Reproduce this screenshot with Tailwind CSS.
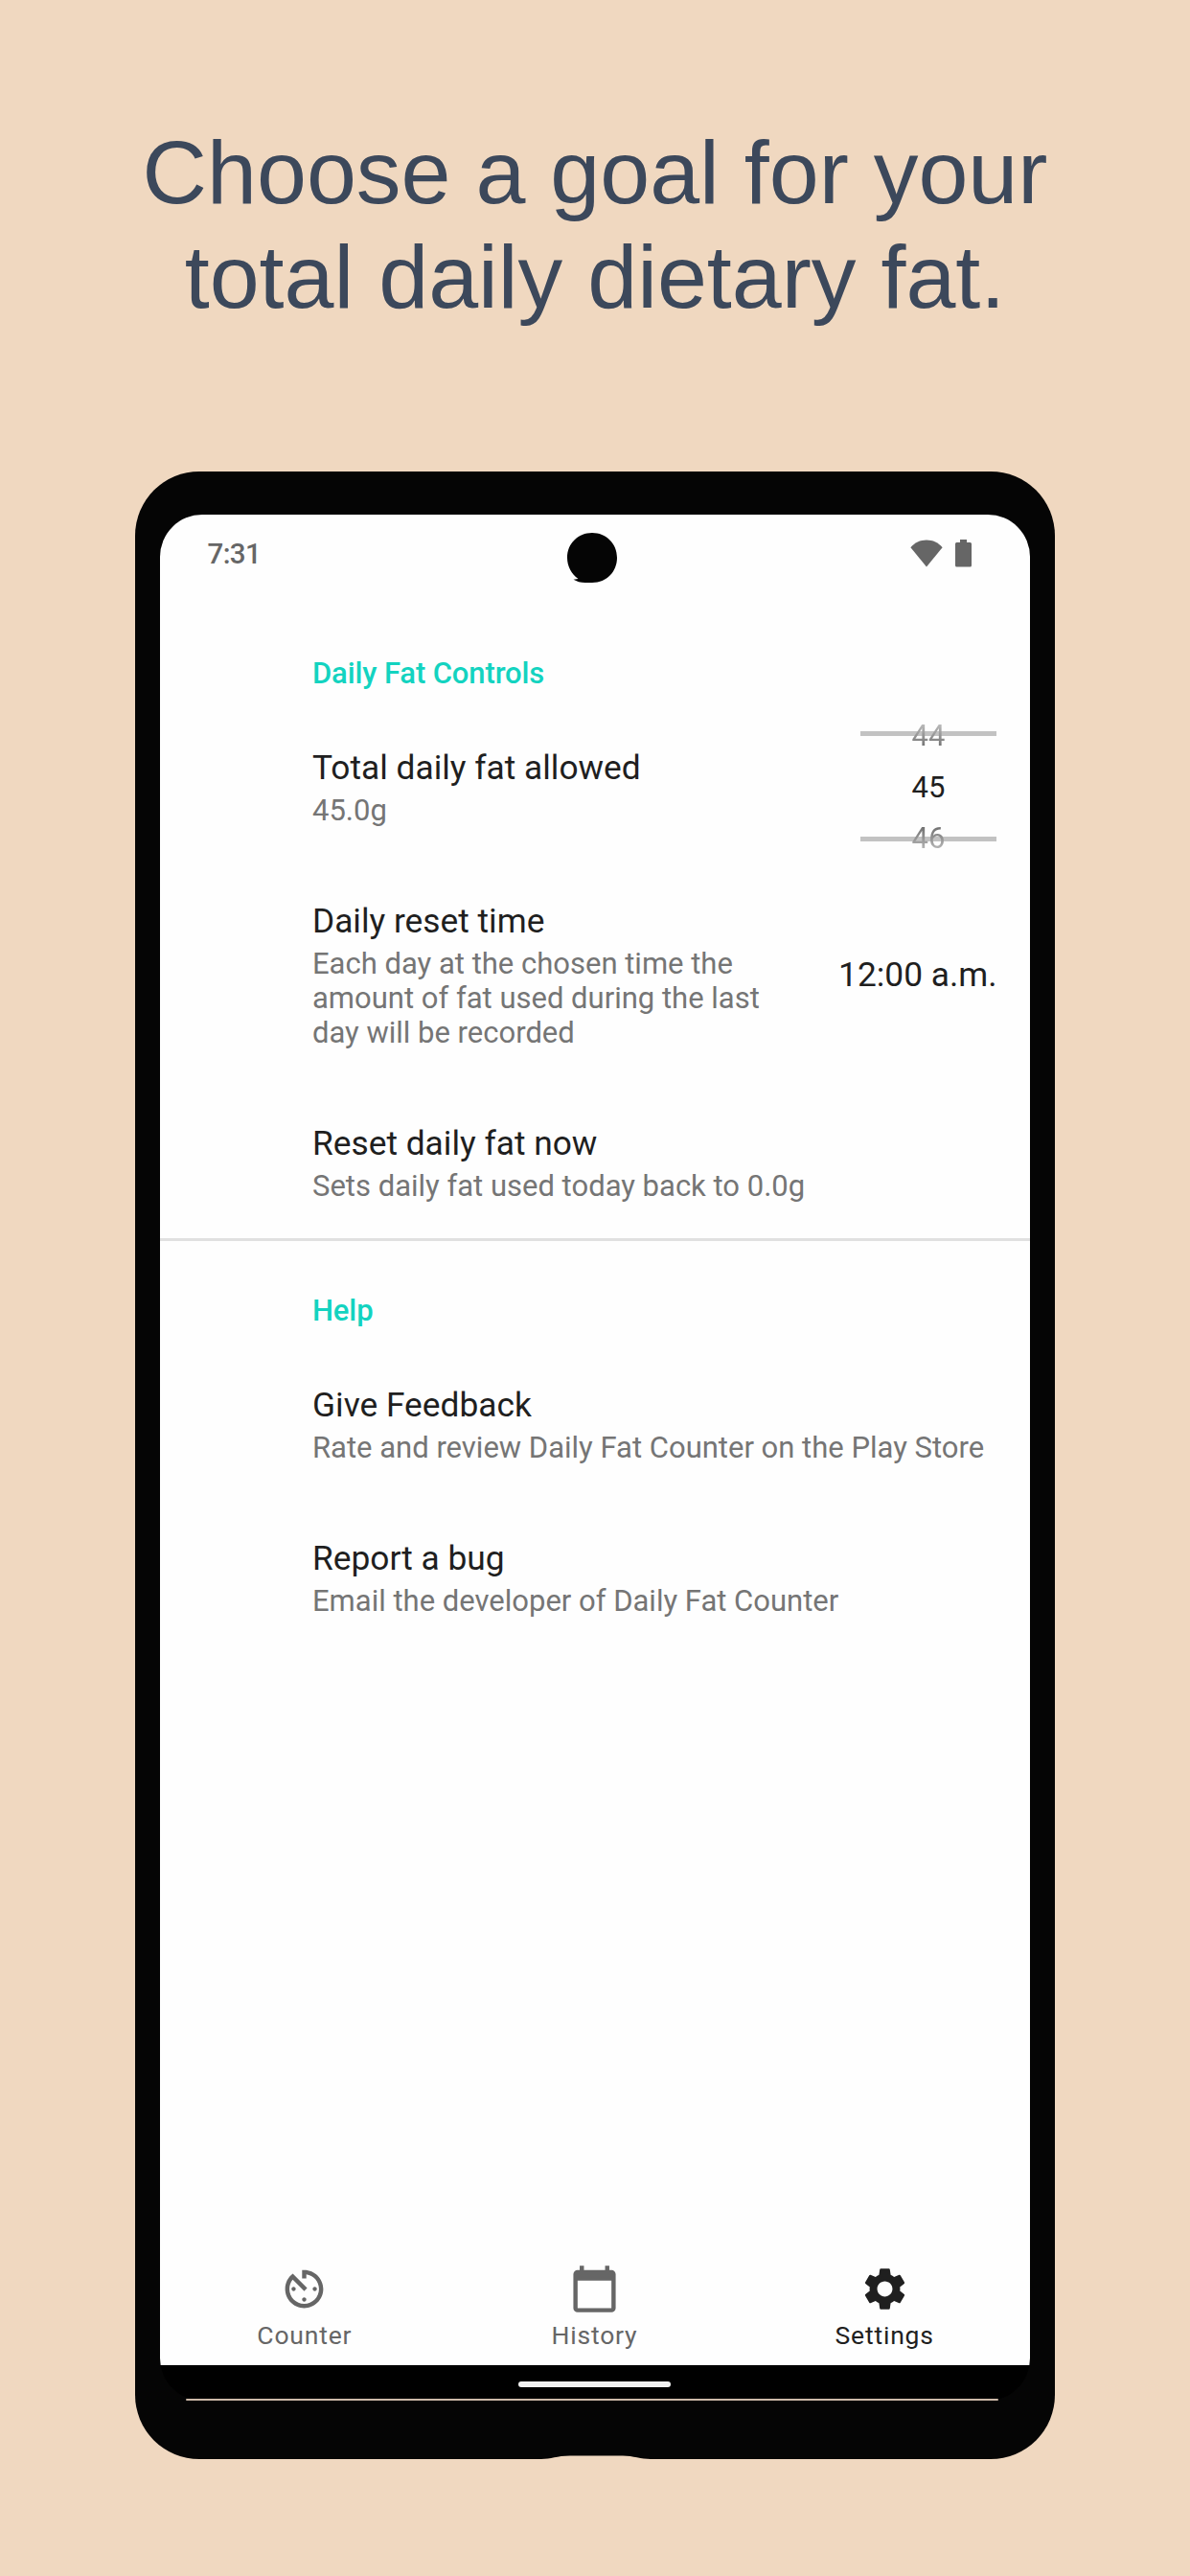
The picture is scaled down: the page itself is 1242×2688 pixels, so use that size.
<!DOCTYPE html>
<html lang="en">
<head>
<meta charset="utf-8">
<title>Daily Fat Counter</title>
<script src="https://cdn.jsdelivr.net/npm/@tailwindcss/browser@4"></script>
</head>
<body class="bg-[#f0d8c0]">
<main class="w-[1242px] h-[2688px] overflow-hidden flex flex-col items-center bg-[#f0d8c0]">
  <h1 class="mt-[125px] h-[367px] text-center text-[93.4px] leading-[109px] text-[#3c485b] font-['Liberation_Sans',sans-serif] whitespace-nowrap">Choose a goal for your<br>total daily dietary fat.</h1>

  <!-- Phone body -->
  <div class="relative w-[960px] h-[2074px] shrink-0 rounded-[67px] bg-[#050505] pt-[45px] pl-[25.5px] pr-[26.5px] font-[Roboto,sans-serif]">
    <div class="relative h-[1968px] rounded-[44px] overflow-hidden flex flex-col">
      <!-- Status bar -->
      <div class="h-[84px] px-[50px] flex items-start justify-between text-[#666] bg-[#fefefe]">
        <span class="mt-[23px] text-[29.500px] leading-[36px] font-medium tracking-[-0.6px]">7:31</span>
        <div class="flex items-start mt-[26px] pr-[11px] gap-[13px]">
          <svg class="w-[34px] h-[29px]" viewBox="0 0 34 29" fill="currentColor"><path d="M17 28.5 .4 8.2C4.600 3.200 10.500.5 17 .5s12.400 2.700 16.600 7.700z"/></svg>
          <svg class="w-[17px] h-[29px]" viewBox="0 0 17 29" fill="currentColor"><path d="M5 0h7v3h3.500a1.500 1.500 0 0 1 1.500 1.500v22.500a1.500 1.500 0 0 1-1.500 1.500h-14a1.500 1.500 0 0 1-1.500-1.500v-22.500a1.500 1.500 0 0 1 1.500-1.500H5z"/></svg>
        </div>
      </div>

      <!-- Settings list -->
      <div class="flex-1 pt-[64px] text-[#1f1f1f] bg-[#fefefe]">
        <h2 class="pl-[159.500px] mb-[20px] text-[31px] leading-[36px] font-medium tracking-[-0.12px] text-[#13d3c0]">Daily Fat Controls</h2>
        <div class="h-[160px] pl-[159.500px] pr-[34.500px] flex justify-between">
          <div class="pt-[39px]">
            <p class="text-[35.3px] leading-[42px]">Total daily fat allowed</p>
            <p class="mt-[6px] text-[31px] leading-[36px] text-[#757575]">45.0g</p>
          </div>
          <div class="relative w-[142px] text-center text-[31px] leading-[53.500px]">
            <div class="absolute inset-x-0 top-[22px] h-[4.500px] bg-[#c2c2c2]"></div>
            <div class="absolute inset-x-0 top-[132px] h-[4.500px] bg-[#c2c2c2]"></div>
            <div class="relative">
              <p class="text-transparent bg-clip-text bg-linear-to-b from-[#c8c8c8] from-20% to-[#6c6c6c] to-75%">44</p>
              <p>45</p>
              <p class="text-transparent bg-clip-text bg-linear-to-b from-[#6c6c6c] from-25% to-[#c8c8c8] to-80%">46</p>
            </div>
          </div>
        </div>
        <div class="h-[232px] pl-[159.500px] pr-[34px] flex justify-between">
          <div class="pt-[39px]">
            <p class="text-[35.3px] leading-[42px]">Daily reset time</p>
            <p class="mt-[6px] text-[31px] leading-[36px] text-[#757575] whitespace-nowrap">Each day at the chosen time the<br>amount of fat used during the last<br>day will be recorded</p>
          </div>
          <p class="pt-[95px] text-[35.3px] leading-[42px] whitespace-nowrap">12:00 a.m.</p>
        </div>
        <div class="h-[159px] pl-[159.500px] pt-[39px]">
          <p class="text-[35.3px] leading-[42px]">Reset daily fat now</p>
          <p class="mt-[6px] text-[31px] leading-[36px] text-[#757575]">Sets daily fat used today back to 0.0g</p>
        </div>
        <div class="h-[3px] bg-[#e0e0e0]"></div>
        <h2 class="pl-[159.500px] mt-[55px] mb-[20px] text-[31px] leading-[36px] font-medium tracking-[-0.12px] text-[#13d3c0]">Help</h2>
        <div class="h-[160px] pl-[159.500px] pt-[39px]">
          <p class="text-[35.3px] leading-[42px]">Give Feedback</p>
          <p class="mt-[6px] text-[31px] leading-[36px] text-[#757575] whitespace-nowrap">Rate and review Daily Fat Counter on the Play Store</p>
        </div>
        <div class="h-[160px] pl-[159.500px] pt-[39px]">
          <p class="text-[35.3px] leading-[42px]">Report a bug</p>
          <p class="mt-[6px] text-[31px] leading-[36px] text-[#757575]">Email the developer of Daily Fat Counter</p>
        </div>
      </div>

      <!-- Bottom tabs -->
      <nav class="h-[106px] shrink-0 grid grid-cols-3 text-[#666] bg-[#fefefe] text-[26.500px] leading-[32px] tracking-[0.8px]">
        <a class="flex flex-col items-center">
          <svg class="size-[53px]" viewBox="0 0 24 24" fill="currentColor"><path d="M11 17c0 .55.45 1 1 1s1-.45 1-1-.45-1-1-1-1 .45-1 1zm0-14v4h2V5.080c3.390.49 6 3.390 6 6.920 0 3.870-3.130 7-7 7s-7-3.130-7-7c0-1.680.59-3.220 1.580-4.420L12 13l1.410-1.410-6.800-6.800v.02C4.420 6.450 3 9.050 3 12c0 4.970 4.020 9 9 9 4.970 0 9-4.030 9-9s-4.030-9-9-9h-1zm7 9c0-.55-.45-1-1-1s-1 .45-1 1 .45 1 1 1 1-.45 1-1zM6 12c0 .55.45 1 1 1s1-.45 1-1-.45-1-1-1-1 .45-1 1z"/></svg>
          <span class="mt-[6px]">Counter</span>
        </a>
        <a class="flex flex-col items-center">
          <svg class="size-[53px]" viewBox="0 0 24 24" fill="currentColor"><path d="M20 3h-1V1h-2v2H7V1H5v2H4c-1.100 0-2 .9-2 2v16c0 1.100.9 2 2 2h16c1.100 0 2-.9 2-2V5c0-1.100-.9-2-2-2zm0 18H4V8h16v13z"/></svg>
          <span class="mt-[6px]">History</span>
        </a>
        <a class="flex flex-col items-center text-[#1f1f1f]">
          <svg class="size-[53px]" viewBox="0 0 24 24" fill="currentColor"><path d="M19.140 12.940c.04-.3.06-.61.06-.94 0-.32-.02-.64-.07-.94l2.030-1.580c.18-.14.23-.41.12-.61l-1.920-3.320c-.12-.22-.37-.29-.59-.22l-2.390.96c-.5-.38-1.030-.7-1.620-.94l-.36-2.540c-.04-.24-.24-.41-.48-.41h-3.840c-.24 0-.43.17-.47.41l-.36 2.540c-.59.24-1.130.57-1.620.94l-2.390-.96c-.22-.08-.47 0-.59.22L2.740 8.870c-.12.21-.08.47.12.61l2.030 1.580c-.05.3-.09.63-.09.94s.02.64.07.94l-2.030 1.580c-.18.14-.23.41-.12.61l1.920 3.320c.12.22.37.29.59.22l2.390-.96c.5.38 1.030.7 1.620.94l.36 2.540c.05.24.24.41.48.41h3.840c.24 0 .44-.17.47-.41l.36-2.540c.59-.24 1.130-.56 1.620-.94l2.390.96c.22.08.47 0 .59-.22l1.920-3.320c.12-.22.07-.47-.12-.61l-2.010-1.580zM12 15.600c-1.980 0-3.600-1.620-3.600-3.600s1.620-3.600 3.600-3.600 3.600 1.620 3.600 3.600-1.620 3.600-3.600 3.600z"/></svg>
          <span class="mt-[6px]">Settings</span>
        </a>
      </nav>

      <!-- Gesture bar -->
      <div class="h-[37px] shrink-0 bg-black flex justify-center pt-[17px]">
        <div class="w-[159px] h-[6px] rounded-full bg-[#f2f2f2]"></div>
      </div>
    </div>
    <!-- Camera hole -->
    <svg class="absolute left-[450px] top-[63px] w-[54px] h-[54px]" viewBox="0 0 54 54" fill="#050505"><path d="M27 1c14.500 0 26 11 26 26 0 14-10.500 26-26 26h-7c-5 0-9-1.300-12.500-3.300l5-.6C5.500 44 1 36 1 27 1 12 12.500 1 27 1z"/></svg>
    <!-- Lower screen edge -->
    <div class="absolute left-[53px] right-[59px] top-[2011px] h-[2px] rounded-full bg-[#cdb9a8]"></div>
    <!-- Notch in the bottom edge -->
    <svg class="absolute left-[424px] bottom-0 w-[114px] h-[4px]" viewBox="0 0 114 4" fill="#f0d8c0"><path d="M0 4C10 4 16 .6 30 .5h55C96 .6 104 4 114 4z"/></svg>
  </div>
</main>
</body>
</html>
